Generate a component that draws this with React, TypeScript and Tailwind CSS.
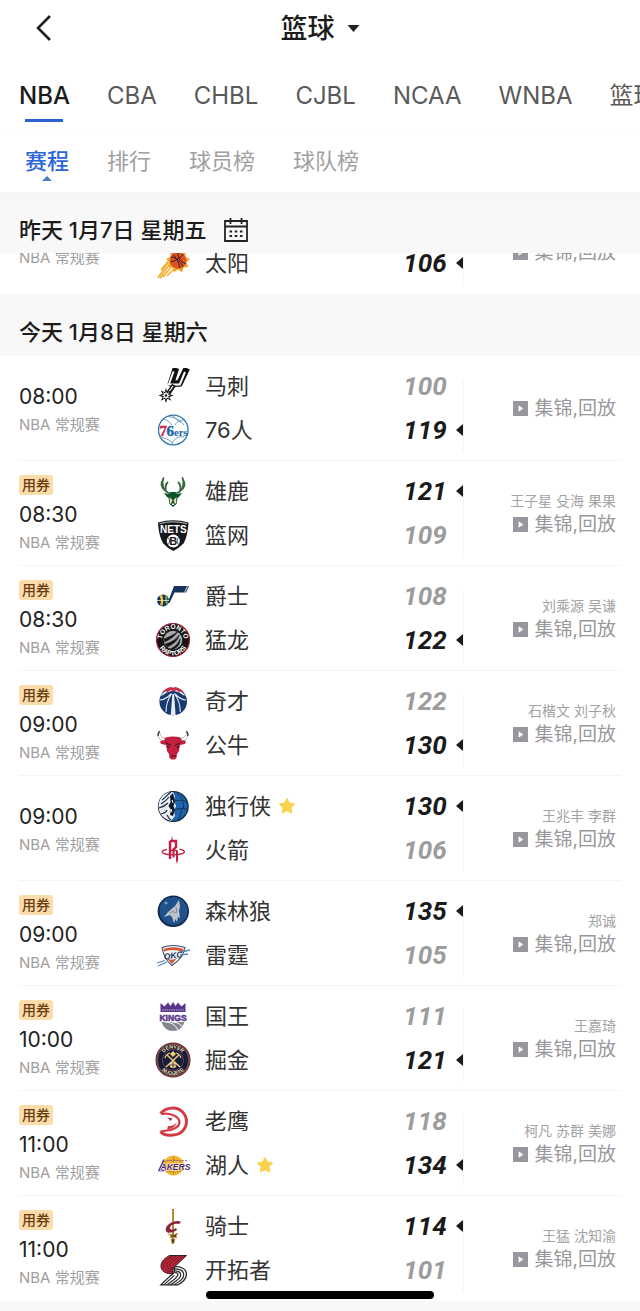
import type { ReactNode } from 'react';

type Team = { name: string; logo: ReactNode; score: number; starred?: boolean };

type Match = {
  time?: string;
  coupon?: boolean;
  teams: Team[];
  winner: number;
  hosts?: string;
};

function starPoints(cx: number, cy: number, outer: number, inner: number, spikes: number) {
  return Array.from({ length: spikes * 2 }, (_, i) => {
    const r = i % 2 === 0 ? outer : inner;
    const a = (Math.PI * i) / spikes - Math.PI / 2;
    return `${(cx + r * Math.cos(a)).toFixed(2)},${(cy + r * Math.sin(a)).toFixed(2)}`;
  }).join(' ');
}

function Logo({ children }: { children: ReactNode }) {
  return (
    <svg viewBox="0 0 36 36" className="size-9 shrink-0" fill="none" aria-hidden="true">
      {children}
    </svg>
  );
}

const suns = (
  <Logo>
    <polygon points={starPoints(23, 16, 12, 8.5, 9)} fill="#f3a024" />
    <path d="M16 13 3 33M16 17 5 33.5M18 20 8 32M20 23 12 31M15 14 6 25" stroke="#f0b02c" strokeWidth="1.5" />
    <circle cx="23" cy="15.5" r="8.3" fill="#dc5320" />
    <path d="M15.500 17c5-1 10-4 13-8M18 9.500c3 3 6 8 7 13.500M23 7.500c-.5 5 2 9 7.500 11M15.800 12c4 0 9 3 12 9.500" stroke="#3b1a2e" strokeWidth="1" />
  </Logo>
);

const spurs = (
  <Logo>
    <path d="M20 3 16 15.500h8.500L30.500 3" stroke="#111" strokeWidth="6.5" strokeLinejoin="round" strokeLinecap="square" />
    <path d="M18.500 3.500 13.800 16.500h11L30 4" stroke="#fff" strokeWidth="2" strokeLinejoin="round" />
    <path d="M19 17 13.500 25" stroke="#111" strokeWidth="4.5" />
    <path d="M18 18 14 24" stroke="#fff" strokeWidth="1.3" />
    <polygon points={starPoints(11, 27.5, 7.5, 3.6, 8)} fill="#111" />
    <polygon points={starPoints(11, 27.5, 4.5, 2.2, 8)} fill="#fff" />
    <circle cx="11" cy="27.5" r="1.2" fill="#111" />
  </Logo>
);

const sixers = (
  <Logo>
    <path d="M8 7c5 1 8 4 8.500 6M18 3.500c2 3 5 6 8 7M12 4.500c7 0 14 4 17 8.500M28 8c-5 1-7 3-8 5M7 25.500c5 1 9 3 11 7M29 25c-5-1-9 1-12 6" stroke="#5b93bd" strokeWidth=".9" />
    <circle cx="18.3" cy="18" r="14.8" stroke="#2f77a8" strokeWidth="1.3" />
    <text x="4.5" y="24" fontFamily="Liberation Serif, serif" fontSize="15" fontWeight="700" fill="#d3204a" stroke="#d3204a" strokeWidth=".4">7</text>
    <text x="11.5" y="24" fontFamily="Liberation Serif, serif" fontSize="15" fontWeight="700" fill="#1767a8" stroke="#1767a8" strokeWidth=".4">6</text>
    <text x="19" y="24" fontFamily="Liberation Serif, serif" fontSize="10.5" fontWeight="700" fill="#1767a8">ers</text>
  </Logo>
);

const bucks = (
  <Logo>
    <path d="M14 20C8 18 6 11 8.500 5M10 17C6.500 15 6 11 7 8.500M11 18c-1-4-1-6 1.500-8.500M22 20c6-2 8-9 5.500-15M26 17c3.500-2 4-6 3-8.500M25 18c1-4 1-6-1.500-8.500" stroke="#33663d" strokeWidth="1.8" strokeLinecap="round" />
    <path d="m9 20 5 1 1.500-2h5l1.500 2 5-1-3 4-1.500 1-1 6-3.500 3-3.500-3-1-6-1.500-1z" fill="#0e5428" />
    <path d="m14.500 24 3 3-1.500 4-1-1zM21.500 24l-3 3 1.500 4 1-1z" fill="#e6dfbd" />
    <path d="m17 30 1 1 1-1v2h-2z" fill="#fff" />
  </Logo>
);

const nets = (
  <Logo>
    <path d="M3 5.500Q18 1 33.500 5.500c-.5 9-2.500 17-5 21Q24 31 18.300 34q-6-3-10-7.500C5.500 22 3.500 15 3 5.500Z" fill="#17191c" />
    <path d="M4.500 6.700Q18 2.800 32 6.700" stroke="#fff" strokeWidth=".7" />
    <text x="18.3" y="15.8" textAnchor="middle" fontFamily="Liberation Sans, sans-serif" fontSize="10" fontWeight="700" fill="#fff">NETS</text>
    <circle cx="18.3" cy="24" r="6.5" fill="#fff" />
    <path d="M13 20.500c2 2 2 5 0 7M23.600 20.500c-2 2-2 5 0 7" stroke="#17191c" strokeWidth=".8" />
    <text x="18.3" y="28" textAnchor="middle" fontFamily="Liberation Sans, sans-serif" fontSize="11" fontWeight="700" fill="#17191c">B</text>
  </Logo>
);

const jazz = (
  <Logo>
    <path d="M19 8h15l-3 6.500H19.500L14.500 25h-2z" fill="#16325f" />
    <path d="m32.500 8-3 6.500" stroke="#fff" strokeWidth=".8" />
    <circle cx="8" cy="22.5" r="6" fill="#16325f" />
    <path d="M4 18c2 2 2.500 6 1 9.500h2.500c1-3 1-7-.5-11z" fill="#e8c53b" />
    <path d="M10.500 17c-1 4-.5 7 1 10l1.500-1.500c-1-2-1-5 0-7z" fill="#6aa05a" />
    <path d="M2 22.500h12" stroke="#f6e9a9" strokeWidth=".8" />
  </Logo>
);

const raptors = (
  <Logo>
    <defs>
      <path id="raptorsTop" d="M7 18a11 11 0 0 1 22 0" />
      <path id="raptorsBottom" d="M2.500 18a15.500 15.500 0 0 0 31 0" />
    </defs>
    <circle cx="18" cy="18" r="16.5" fill="#151515" stroke="#a32035" strokeWidth="1.2" />
    <circle cx="18" cy="18" r="9.3" fill="#a5a8ac" />
    <path d="M9 17c5-2 10-4 14-8-2 4-7 8-13.500 11M10 22c5-1 11-4 14-9-1 5-5 9-12 12M15 27c5-2 8-5 10-10 0 5-2 8-7 10.500" fill="#151515" stroke="#151515" strokeWidth=".6" />
    <text fontFamily="Liberation Sans, sans-serif" fontSize="6.6" fontWeight="700" fill="#fff">
      <textPath href="#raptorsTop" startOffset="50%" textAnchor="middle">TORONTO</textPath>
    </text>
    <text fontFamily="Liberation Sans, sans-serif" fontSize="6.6" fontWeight="700" fill="#fff">
      <textPath href="#raptorsBottom" startOffset="50%" textAnchor="middle">RAPTORS</textPath>
    </text>
  </Logo>
);

const wizards = (
  <Logo>
    <circle cx="18.2" cy="18.5" r="13.8" fill="#173a70" />
    <path d="M5.500 13Q18-2 30.500 13L28 12Q18 4 8 12z" fill="#fff" />
    <path d="M6.500 10Q11 4.500 16.500 4L18 5.500 19.500 4Q25 4.500 29.500 10l-4-2-1 1.500-3-2.500-3 1.500-3-1.500-3.500 2.500-1-1.500z" fill="#cf2746" />
    <path d="M17.300 11 15.800 32h4.800L19.100 11z" fill="#e8edf3" />
    <path d="M16.500 11C13 16 11 21 11 29M19.800 11c3.500 5 5.500 10 5.500 18M5 17c4 0 8-3 11.500-6.500M31 17c-4 0-8-3-11.500-6.500" stroke="#e8edf3" strokeWidth="1.1" />
  </Logo>
);

const bulls = (
  <Logo>
    <path d="M4.500 4C1.500 9 4 14 11 14l1-2.500C7 11.500 4.500 9 4.500 4ZM31.500 4c3 5 .5 10-6.500 10l-1-2.500c5 0 7.500-2.500 7.500-7.500Z" fill="#fff" stroke="#a3979a" strokeWidth=".8" />
    <path d="M4.500 4C3 6 2.700 7 3.200 9M31.500 4c1.500 2 1.800 3 1.300 5" stroke="#262020" strokeWidth="1.2" />
    <path d="M10.500 10.500Q18 8.500 25.500 10.500l1.500 3 4 .5-1 3-5 1-1 6-2 3-.5 4-2 1.500h-3L14.500 31 14 27l-2-3-1-6-5-1-1-3 4-.5z" fill="#c3203f" />
    <path d="m11 16 5 2.500M25 16l-5 2.500M15 29h6M14 21l-2-2M22 21l2-2" stroke="#4b1120" strokeWidth="1.1" />
  </Logo>
);

const mavericks = (
  <Logo>
    <circle cx="18.3" cy="18.5" r="14.8" fill="#1d65ae" stroke="#14263d" strokeWidth="1.3" />
    <path d="M22 5c5 4 7 9 6.500 15M19 13c5-1 9-1 13 1M19 22c5-2 9-2 13-1M23 31c3-3 4-7 3.500-11" stroke="#17375c" strokeWidth="1" />
    <path d="M16 4C8 5 3.500 11 3.600 19c.2 7 5 12 12.400 14l4-5-1-5 2-5-2-6 1-4-2-4z" fill="#e9edf1" />
    <path d="M16 4c-4 3-6 6-9 8M14 9c-3 4-5 5-8 7M13 15c-3 3-5 4-9 5M12 22c-1 3-3 3-6 4M12 27c1 2 2 4 4 5" stroke="#14263d" strokeWidth="1.1" />
    <path d="m15 8 3-3 1 4 1 5-1.500 4 1.500 4-2 6-3-1 1-5-2.500-4 2-4z" fill="#101a28" />
    <path d="m17 12 1 3M16 21l1 3" stroke="#fff" strokeWidth="1" />
  </Logo>
);

const rockets = (
  <Logo>
    <path d="M12 17.500C7 18 5.500 20 9 21.500c4 1.800 14 1.800 18.500 0 3.500-1.500 2-3.500-3-4.200" stroke="#b9304d" strokeWidth="1.4" />
    <path d="M15 9v18M15 9h6v6l-3 3" stroke="#c61d40" strokeWidth="2.4" />
    <path d="M18.500 17.500v8M22 18.500V29" stroke="#c61d40" strokeWidth="2" />
    <path d="m16 10 1-6.500L18 10zM21 28h2l-1 4z" fill="#c61d40" />
    <path d="M15 18.500h7" stroke="#c61d40" strokeWidth="1.5" />
  </Logo>
);

const timberwolves = (
  <Logo>
    <circle cx="18.300" cy="18.300" r="15" fill="#20518a" stroke="#122a4e" strokeWidth="1.5" />
    <path d="M5 14A14 14 0 0 0 31 25Q26 32 18 32 8 31 5 22z" fill="#13305c" />
    <path d="m24 7-4 6-7 6-4 5 6-2 2 2 2 6 1.500-4 1.500 3 1-5 2 1-1-7 1-5z" fill="#bdc3c8" />
    <path d="m21 14 1 5-3 1M15 20l4-2" stroke="#758496" strokeWidth=".9" />
    <path d="m11 8 .6 1.500 1.600.5-1.600.5L11 12l-.6-1.500L8.800 10l1.600-.5z" fill="#8ec0d8" />
  </Logo>
);

const thunder = (
  <Logo>
    <path d="M7 10.500Q18 6.500 30 10.500q-2 11-13 18Q9 22 7 10.500Z" fill="#f2f3f5" stroke="#38506f" strokeWidth="1.1" />
    <path d="M8.500 12Q18 8.500 28.500 12l-1 3Q19 11.500 9 14.500z" fill="#d9552f" />
    <path d="M12 21.500q7 3 11-1.500l-6 7z" fill="#cf5a3a" />
    <path d="m2 26 8-2.500M3 29l9-4M26 15l9-2M25 18l8-1" stroke="#5a87b4" strokeWidth="1.3" />
    <text x="18" y="21.5" textAnchor="middle" transform="rotate(-8 18 18)" fontFamily="Liberation Sans, sans-serif" fontSize="8.5" fontStyle="italic" fontWeight="700" fill="#203a61">OKC</text>
  </Logo>
);

const kings = (
  <Logo>
    <path d="m5.500 5 4 3.500L13 4.500l2.500 3.500L18 4l2.500 4L23 4.500l3.500 4 4-3.500v9h-25z" fill="#57368b" />
    <path d="M7 12h22" stroke="#c3b4da" strokeWidth="1.2" strokeDasharray="1.5 .8" />
    <text x="18" y="22.5" textAnchor="middle" fontFamily="Liberation Sans, sans-serif" fontSize="8.600" fontWeight="700" fill="#57368b" stroke="#57368b" strokeWidth=".5">KINGS</text>
    <path d="M6.500 24h23q-3 9-11.500 9T6.500 24Z" fill="#81878e" />
    <path d="M10 24q9 0 13 8M17 24q7 0 10 4" stroke="#fff" strokeWidth="1" />
  </Logo>
);

const nuggets = (
  <Logo>
    <defs>
      <path id="nuggetsTop" d="M6.500 18a11.500 11.500 0 0 1 23 0" />
      <path id="nuggetsBottom" d="M3 18a15 15 0 0 0 30 0" />
    </defs>
    <circle cx="18" cy="18" r="16.8" fill="#151d3b" stroke="#7c2f3c" strokeWidth="1.5" />
    <circle cx="18" cy="18" r="15.8" stroke="#c69b4c" strokeWidth=".5" />
    <circle cx="18" cy="18" r="10.5" stroke="#8f4753" strokeWidth=".7" />
    <path d="m11 25 13-12M25 25 12 13" stroke="#f0cc73" strokeWidth="1.5" />
    <path d="M10 16q1-4 5-5M26 16q-1-4-5-5" stroke="#f0cc73" strokeWidth="1.2" />
    <path d="m18 9 3 3-3 3-3-3z" fill="#f0cc73" />
    <circle cx="18" cy="23" r="3.3" fill="#eed08c" />
    <path d="M18 20v6M15 23h6" stroke="#151d3b" strokeWidth=".7" />
    <text fontFamily="Liberation Sans, sans-serif" fontSize="5" fontWeight="700" fill="#f3dfad">
      <textPath href="#nuggetsTop" startOffset="50%" textAnchor="middle">DENVER</textPath>
    </text>
    <text fontFamily="Liberation Sans, sans-serif" fontSize="5" fontWeight="700" fill="#f3dfad">
      <textPath href="#nuggetsBottom" startOffset="50%" textAnchor="middle">NUGGETS</textPath>
    </text>
  </Logo>
);

const hawks = (
  <Logo>
    <path d="M5.500 10.500C9 6.500 13 5 18 5a13.300 13.300 0 0 1 0 27C12 33 8 31.500 5.500 28.500" stroke="#d43b45" strokeWidth="3" />
    <path d="M6 11C15 9.500 24 13 24.500 19c.2 4-4 6.500-8.500 8l-10.500 1.500" stroke="#d43b45" strokeWidth="2.200" />
    <path d="M13 23c4 .5 7-1 8.500-3.500-1 5-5 6.500-9.500 7.500z" fill="#d43b45" />
    <path d="m12.500 14.500 5 1-2 2.500z" fill="#a92535" />
  </Logo>
);

const lakers = (
  <Logo>
    <ellipse cx="18.5" cy="18.5" rx="10.5" ry="10" fill="#f4b52d" />
    <path d="M18.500 9v19M9 15q9-4 19 0M9 23q9 4 19 0" stroke="#b98529" strokeWidth=".8" />
    <path d="M12 13.500h20" stroke="#8c6aa8" strokeWidth=".8" strokeDasharray="2 1" />
    <path d="M9 12.500 4 23.500h5" stroke="#51266f" strokeWidth="1.5" />
    <text x="20.5" y="22.5" textAnchor="middle" fontFamily="Liberation Sans, sans-serif" fontSize="8.600" fontWeight="700" fontStyle="italic" fill="#51266f" stroke="#fff" strokeWidth="1" paintOrder="stroke">AKERS</text>
  </Logo>
);

const cavaliers = (
  <Logo>
    <path d="M18 1v31" stroke="#9b6b25" strokeWidth="1.9" />
    <path d="M18 2v22" stroke="#e3b23b" strokeWidth=".8" />
    <path d="M26 14q-3-2-8 0c-6 2-8 6-7 9 1 3 6 2 11-1l-1-2c-3 2-6 2-6 0 0-3 5-5 9-4z" fill="#8c2338" />
    <path d="m13 26 5 1 5-2-2 3 1 2-4-1-3 1 1-2zM16 31h4l-1 4-2 1z" fill="#5b3c1c" stroke="#d0a035" strokeWidth=".6" />
  </Logo>
);

const pinwheelHalf = 'M14.500 3.500H31.500L21.500 13c-3 1.500-4 4-3.500 8.500C11 22.500 5.500 19 6 13.500 6.300 9 10 6 14.500 3.500Z';
const pinwheelStripes =
  'M18.500 3.500C12 7.500 8.500 9.500 8.700 14c.3 4 4.500 5.500 9.300 5.500M22 3.500C15 8.500 11.500 10.500 11.700 14c.3 2.500 3 3.500 6.300 3.500M25.500 3.500c-7 5.500-11 7.500-11 10.500 0 1.500 1.500 2 3.500 1.500M28.500 3.500 18 13';

const blazers = (
  <Logo>
    <g transform="rotate(180 18.700 18.200)">
      <path d={pinwheelHalf} fill="#fff" stroke="#2b2c30" strokeWidth="1.300" />
      <path d={pinwheelStripes} stroke="#2b2c30" strokeWidth="1.200" />
    </g>
    <path d={pinwheelHalf} fill="#bd2638" stroke="#301c22" strokeWidth="1" />
    <path d={pinwheelStripes} stroke="#5b1c28" strokeWidth=".9" />
  </Logo>
);

const today: Match[] = [
  { time: '08:00', winner: 1, teams: [{ name: '马刺', logo: spurs, score: 100 }, { name: '76人', logo: sixers, score: 119 }] },
  { time: '08:30', coupon: true, winner: 0, hosts: '王子星 殳海 果果', teams: [{ name: '雄鹿', logo: bucks, score: 121 }, { name: '篮网', logo: nets, score: 109 }] },
  { time: '08:30', coupon: true, winner: 1, hosts: '刘乘源 吴谦', teams: [{ name: '爵士', logo: jazz, score: 108 }, { name: '猛龙', logo: raptors, score: 122 }] },
  { time: '09:00', coupon: true, winner: 1, hosts: '石楷文 刘子秋', teams: [{ name: '奇才', logo: wizards, score: 122 }, { name: '公牛', logo: bulls, score: 130 }] },
  { time: '09:00', winner: 0, hosts: '王兆丰 李群', teams: [{ name: '独行侠', logo: mavericks, score: 130, starred: true }, { name: '火箭', logo: rockets, score: 106 }] },
  { time: '09:00', coupon: true, winner: 0, hosts: '郑诚', teams: [{ name: '森林狼', logo: timberwolves, score: 135 }, { name: '雷霆', logo: thunder, score: 105 }] },
  { time: '10:00', coupon: true, winner: 1, hosts: '王嘉琦', teams: [{ name: '国王', logo: kings, score: 111 }, { name: '掘金', logo: nuggets, score: 121 }] },
  { time: '11:00', coupon: true, winner: 1, hosts: '柯凡 苏群 美娜', teams: [{ name: '老鹰', logo: hawks, score: 118 }, { name: '湖人', logo: lakers, score: 134, starred: true }] },
  { time: '11:00', coupon: true, winner: 0, hosts: '王猛 沈知渝', teams: [{ name: '骑士', logo: cavaliers, score: 114 }, { name: '开拓者', logo: blazers, score: 101 }] },
];

function TeamLine({ team, won }: { team: Team; won: boolean }) {
  return (
    <div className="flex h-11 items-center">
      {team.logo}
      <span className="ml-[14px] text-[22px] leading-none text-[#333]">{team.name}</span>
      {team.starred && (
        <svg viewBox="0 0 18 18" className="ml-[7px] size-[18px]" aria-hidden="true">
          <polygon points={starPoints(9, 9.5, 8, 4.2, 5)} fill="#fbd24d" stroke="#fbd24d" strokeLinejoin="round" />
        </svg>
      )}
      <span
        className={`ml-auto w-[60px] text-center font-[Roboto,sans-serif] text-[26px] leading-none font-bold italic ${
          won ? 'text-[#1a1a1a]' : 'text-[#9c9c9e]'
        }`}
      >
        {team.score}
      </span>
      <svg viewBox="0 0 8 12" className="h-3 w-2" aria-hidden="true">
        {won && <path d="M8 0v12L1 6z" fill="#1a1a1a" />}
      </svg>
    </div>
  );
}

function MatchRow({ match, offset = 0 }: { match: Match; offset?: number }) {
  return (
    <li className="mx-[19px] flex h-[105px] shrink-0 border-b border-[#f4f4f4] last:border-transparent">
      <div className="flex w-[136px] flex-col items-start justify-center pt-1">
        {match.coupon && (
          <span className="mt-px mb-[5px] h-5 rounded-[3px] bg-[#fbdcab] px-[3px] text-[14px] leading-5 font-medium text-[#6a3d12]">
            用券
          </span>
        )}
        <span className="h-[29px] text-[21px] leading-[29px] text-[#222]">{match.time}</span>
        <span className="text-[15px] leading-7 text-[#a0a0a0]">NBA 常规赛</span>
      </div>
      <div className="flex flex-1 flex-col pt-2">
        {offset > 0 && <div className="h-11" />}
        {match.teams.map((team, i) => (
          <TeamLine key={team.name} team={team} won={i + offset === match.winner} />
        ))}
      </div>
      <div className="mt-6 mb-2 w-px bg-[#f5f5f5]" />
      <div className="flex w-[157px] flex-col items-end justify-center pr-[5px]">
        {match.hosts !== undefined && (
          <span className="h-[22px] text-[14px] leading-[22px] text-[#a3a3a3]">{match.hosts}</span>
        )}
        <a href="#replay" className="flex items-center gap-[7px] text-[19px] leading-[25px] text-[#98989b]">
          <svg viewBox="0 0 16 16" className="size-[15px]" aria-hidden="true">
            <path d="M0 0h16v16H0z" fill="#97989e" />
            <path d="m6 4.500 5 3.500-5 3.500z" fill="#fff" />
          </svg>
          集锦,回放
        </a>
      </div>
    </li>
  );
}

export default function App() {
  const leagues = ['NBA', 'CBA', 'CHBL', 'CJBL', 'NCAA', 'WNBA', '篮球'];
  const sections = ['赛程', '排行', '球员榜', '球队榜'];
  return (
    <div className="overflow-x-hidden bg-white font-[Inter,'Noto_Sans_CJK_SC',sans-serif]">
      <header className="grid h-14 grid-cols-[1fr_auto_1fr] items-center">
        <button type="button" aria-label="返回" className="ml-[34px] w-5">
          <svg viewBox="0 0 20 28" className="h-7 w-5" fill="none" aria-hidden="true">
            <path d="M16 2 4 14l12 12" stroke="#222" strokeWidth="2.6" />
          </svg>
        </button>
        <button type="button" className="flex items-center gap-3 text-[27px] leading-none font-medium text-[#1c1c1c]">
          篮球
          <svg viewBox="0 0 12 7" className="h-[7px] w-[13px]" aria-hidden="true">
            <path d="M0 0h12L6 7z" fill="#222" />
          </svg>
        </button>
      </header>

      <nav className="flex h-19 gap-[37px] overflow-hidden border-b border-[#fafafa] pl-[19px]">
        {leagues.map((league, i) => (
          <button
            key={league}
            type="button"
            className={`flex shrink-0 flex-col items-center pt-6 text-[24px] leading-8 ${
              i === 0 ? 'font-medium text-[#1c1c1c]' : 'text-[#5a5a5a]'
            }`}
          >
            {league}
            {i === 0 && <span className="mt-[7px] h-[3px] w-[38px] bg-[#2a62cf]" />}
          </button>
        ))}
      </nav>

      <nav className="flex h-15 gap-[38px] pl-[25px]">
        {sections.map((section, i) => (
          <button
            key={section}
            type="button"
            className={`flex flex-col items-center pt-[13px] text-[22px] leading-8 ${
              i === 0 ? 'font-medium text-[#2a66d9]' : 'text-[#a0a0a0]'
            }`}
          >
            {section}
            {i === 0 && (
              <svg viewBox="0 0 10 5" className="-mt-px h-[5px] w-2.5" aria-hidden="true">
                <path d="M0 5h10L5 0z" fill="#4a7bc8" />
              </svg>
            )}
          </button>
        ))}
      </nav>

      <section>
        <h2 className="flex h-[61px] items-center gap-[18px] border-t-[7px] border-[#f5f5f5] bg-[#f8f8f8] pt-2 pl-[19px] text-[22px] leading-none font-medium text-[#1c1c1c]">
          昨天 1月7日 星期五
          <svg viewBox="0 0 24 24" className="size-6" fill="none" aria-hidden="true">
            <path d="M1 3h22v20H1zM1 8.500h22M6.500 0v6M17.500 0v6" stroke="#222" strokeWidth="1.8" />
            <path d="M5.500 13.500h13M5.500 18h13" stroke="#222" strokeWidth="2.2" strokeDasharray="2.6 2.6" />
          </svg>
        </h2>
        <ul className="flex h-[41px] flex-col justify-end overflow-hidden">
          <MatchRow offset={1} match={{ winner: 1, hosts: '', teams: [{ name: '太阳', logo: suns, score: 106 }] }} />
        </ul>
      </section>

      <section>
        <h2 className="flex h-[62px] items-center bg-[#f8f8f8] pt-[14px] pl-[19px] text-[22px] leading-none font-medium text-[#1c1c1c]">
          今天 1月8日 星期六
        </h2>
        <ul>
          {today.map((match) => (
            <MatchRow key={match.teams[0].name} match={match} />
          ))}
        </ul>
      </section>

      <footer className="h-2.5 bg-[#f8f8f8]" />
      <div className="fixed bottom-3 left-1/2 h-2 w-[228px] -translate-x-1/2 rounded-full bg-black" />
    </div>
  );
}
